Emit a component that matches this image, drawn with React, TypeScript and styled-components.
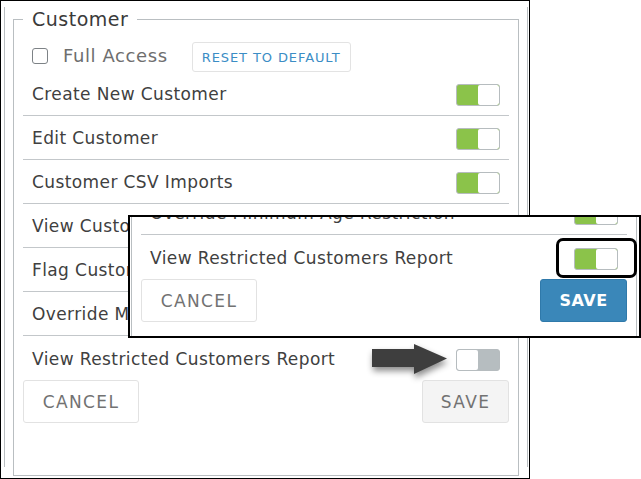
import styled, { createGlobalStyle } from "styled-components";

const GlobalStyle = createGlobalStyle`
  html, body {
    margin: 0;
    padding: 0;
    background: #fff;
  }
  body {
    font-family: "DejaVu Sans", "Liberation Sans", sans-serif;
    color: #404040;
  }
`;

type Perm = { label: string; on: boolean };

const perms: Perm[] = [
  { label: "Create New Customer", on: true },
  { label: "Edit Customer", on: true },
  { label: "Customer CSV Imports", on: true },
  { label: "View Customer Details", on: true },
  { label: "Flag Customer", on: true },
  { label: "Override Minimum Age Restriction", on: true },
];

function Switch({ on }: { on: boolean }) {
  return (
    <Track $on={on}>
      <Knob $on={on} />
    </Track>
  );
}

function Arrow() {
  return (
    <ArrowSvg width="76" height="31" viewBox="0 0 76 31">
      <path d="M0 5 H42 V0 L75 14.5 L42 30 V23 H0 Z" fill="#3e3e3e" />
    </ArrowSvg>
  );
}

export default function App() {
  return (
    <Page>
      <GlobalStyle />
      <Frame>
        <Panel>
          <Fieldset>
            <Legend>Customer</Legend>
            <AccessRow>
              <Checkbox />
              <AccessLabel>Full Access</AccessLabel>
              <ResetButton>Reset to default</ResetButton>
            </AccessRow>
            {perms.map((p) => (
              <Row key={p.label} $divider>
                <Label>{p.label}</Label>
                <Switch on={p.on} />
              </Row>
            ))}
            <Row>
              <Label>View Restricted Customers Report</Label>
              <SwitchHolder>
                <Arrow />
                <Switch on={false} />
              </SwitchHolder>
            </Row>
            <Actions>
              <Button>Cancel</Button>
              <Button $variant="disabled">Save</Button>
            </Actions>
          </Fieldset>
        </Panel>
      </Frame>

      <Zoomed>
        <ZoomBody>
          <Row $divider>
            <Label>Override Minimum Age Restriction</Label>
            <Switch on />
          </Row>
          <Row>
            <Label>View Restricted Customers Report</Label>
            <SwitchHolder>
              <Ring />
              <Switch on />
            </SwitchHolder>
          </Row>
          <Actions>
            <Button>Cancel</Button>
            <Button $variant="primary">Save</Button>
          </Actions>
        </ZoomBody>
      </Zoomed>
    </Page>
  );
}

const Page = styled.div`
  position: relative;
  width: 641px;
  height: 479px;
  overflow: hidden;
`;

const Frame = styled.div`
  box-sizing: border-box;
  width: 530px;
  height: 479px;
  border: 1px solid #000;
`;

const Panel = styled.div`
  box-sizing: border-box;
  margin: 17px 0 0 3px;
  width: 524px;
  height: 460px;
  border-left: 1px solid #b9bec1;
  border-right: 1px solid #b9bec1;
`;

const Fieldset = styled.fieldset`
  box-sizing: border-box;
  margin: -11px 0 0 8px;
  width: 506px;
  height: 469px;
  padding: 0 9px;
  border: 1px solid #b9bec1;
  min-inline-size: 0;
`;

const Legend = styled.legend`
  padding: 0 9px;
  font-size: 19px;
  line-height: 24px;
  letter-spacing: 0.5px;
  color: #3a3a3a;
`;

const AccessRow = styled.div`
  display: flex;
  align-items: center;
  height: 30px;
  margin-top: 11px;
  padding-left: 9px;
`;

const Checkbox = styled.span`
  box-sizing: border-box;
  width: 16px;
  height: 16px;
  margin: 0 15px 3px 0;
  border: 1.5px solid #7d8286;
  border-radius: 3px;
`;

const AccessLabel = styled.span`
  font-size: 18px;
  letter-spacing: 0.6px;
  color: #6e6e6e;
  margin-bottom: 3px;
`;

const ResetButton = styled.button`
  box-sizing: border-box;
  margin-left: 24px;
  height: 30px;
  padding: 0 9px;
  border: 1px solid #e3e3e3;
  border-radius: 3px;
  background: #fff;
  font-family: "DejaVu Sans", sans-serif;
  font-size: 13px;
  letter-spacing: 0.9px;
  text-transform: uppercase;
  color: #3b8dc5;
`;

const Row = styled.div<{ $divider?: boolean }>`
  box-sizing: border-box;
  display: flex;
  align-items: center;
  justify-content: space-between;
  height: 44px;
  padding: 3px 9px 0;
  border-bottom: ${(p) => (p.$divider ? "1px solid #c3c7ca" : "none")};
`;

const Label = styled.span`
  font-size: 17px;
  line-height: 20px;
  letter-spacing: 0.4px;
  color: #404040;
  white-space: nowrap;
  margin-top: -2px;
`;

const SwitchHolder = styled.span`
  position: relative;
  display: flex;
`;

const Track = styled.span<{ $on: boolean }>`
  box-sizing: border-box;
  position: relative;
  display: block;
  width: 44px;
  height: 22px;
  border: 1px solid #b6bcbf;
  border-radius: 3px;
  background: ${(p) => (p.$on ? "#8bc34a" : "#b6bdc0")};
  overflow: hidden;
`;

const Knob = styled.span<{ $on: boolean }>`
  position: absolute;
  top: 0;
  bottom: 0;
  width: 21px;
  left: ${(p) => (p.$on ? "21px" : "0")};
  background: #fff;
  border-radius: 2px;
`;

const ArrowSvg = styled.svg`
  position: absolute;
  left: -84px;
  top: -5px;
  overflow: visible;
  filter: drop-shadow(1px 4px 3px rgba(0, 0, 0, 0.45));
`;

const Ring = styled.span`
  position: absolute;
  inset: -10px -19px -8px -18px;
  border: 3px solid #000;
  border-radius: 7px;
`;

const Actions = styled.div`
  display: flex;
  justify-content: space-between;
  height: 43px;
`;

const Button = styled.button<{ $variant?: "disabled" | "primary" }>`
  box-sizing: border-box;
  height: 43px;
  width: ${(p) => (p.$variant ? "87px" : "116px")};
  border: 1px solid
    ${(p) => (p.$variant === "primary" ? "#2f79aa" : "#e2e2e2")};
  border-radius: 3px;
  background: ${(p) =>
    p.$variant === "primary"
      ? "#3a87b9"
      : p.$variant === "disabled"
      ? "#f4f4f4"
      : "#fff"};
  color: ${(p) => (p.$variant === "primary" ? "#fff" : "#727272")};
  font-family: "DejaVu Sans", sans-serif;
  font-size: ${(p) => (p.$variant === "primary" ? "16px" : "17px")};
  font-weight: ${(p) => (p.$variant === "primary" ? 700 : 400)};
  letter-spacing: ${(p) => (p.$variant === "primary" ? "0.5px" : "1.4px")};
  text-transform: uppercase;
  padding: 0;
`;

const Zoomed = styled.div`
  box-sizing: border-box;
  position: absolute;
  left: 128px;
  top: 215px;
  width: 513px;
  height: 123px;
  border: 2px solid #000;
  background: #fff;
  overflow: hidden;
`;

const ZoomBody = styled.div`
  box-sizing: border-box;
  margin: -26px 0 0 1px;
  width: 506px;
  padding: 0 9px;
  border-left: 1px solid #b9bec1;
  border-right: 1px solid #b9bec1;
  height: 200px;
`;
